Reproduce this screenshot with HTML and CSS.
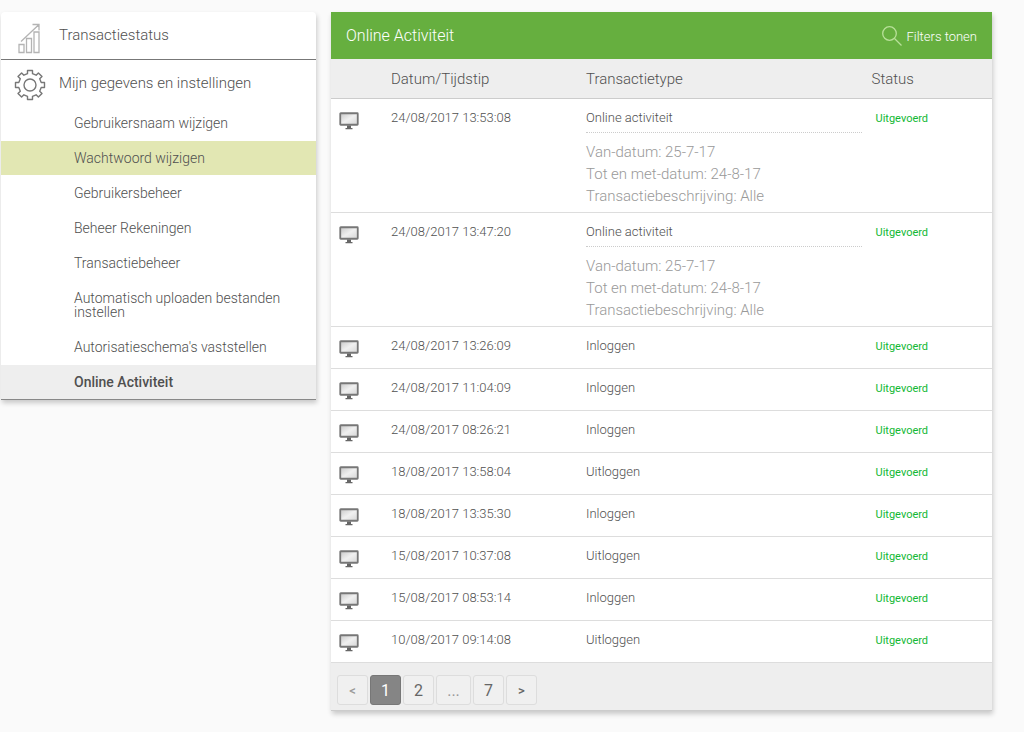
FILE: index.html
```html
<!DOCTYPE html>
<html lang="nl">
<head>
<meta charset="utf-8">
<meta name="viewport" content="width=device-width, initial-scale=1">
<title>Online Activiteit</title>
<link rel="stylesheet" href="styles.css">
</head>
<body>
<svg class="sprite" aria-hidden="true">
  <defs>
    <linearGradient id="screen-fill" x1="0" y1="0" x2="1" y2="1">
      <stop offset="0" stop-color="#c8c8c8"/>
      <stop offset="0.5" stop-color="#f0f0f0"/>
      <stop offset="1" stop-color="#d6d6d6"/>
    </linearGradient>
  </defs>
  <symbol id="monitor" viewBox="0 0 20 18">
    <rect x="1.250" y="1.250" width="17.500" height="11.500" rx="0.500" fill="url(#screen-fill)" stroke="#777" stroke-width="1.800"/>
    <path d="M8 13.500h4v2.500h1.500v1.300h-7V16H8z" fill="#666"/>
  </symbol>
</svg>
<div class="page">
  <nav class="sidebar" aria-label="Menu">
    <a class="menu-item menu-item-ruled" href="#">
      <svg class="menu-icon" viewBox="0 0 32 32" fill="none" stroke="#b4b4b4" stroke-width="1.300" aria-hidden="true">
        <path d="M5 22.500h5v8H5zM12.500 16.500h5v14h-5zM20 10h5v20.500h-5zM7 19.500 24.500 3M18.500 2.500H25v6"/>
      </svg>
      <span>Transactiestatus</span>
    </a>
    <a class="menu-item" href="#">
      <svg class="menu-icon" viewBox="0 0 32 32" fill="none" stroke="#777" stroke-width="1.400" stroke-linejoin="round" aria-hidden="true">
        <path d="M13.500 1.500h5v3.200l3.600 1.500 2.300-2.300 3.600 3.600-2.300 2.300 1.500 3.700h3.300v5h-3.300l-1.500 3.700 2.300 2.300-3.600 3.600-2.300-2.300-3.600 1.500v3.200h-5v-3.200l-3.600-1.500-2.300 2.300L4 24.500l2.300-2.300-1.500-3.700H1.500v-5h3.300l1.500-3.700L4 7.500l3.600-3.600 2.300 2.300 3.600-1.500z"/>
        <circle cx="16" cy="16" r="6"/>
      </svg>
      <span>Mijn gegevens en instellingen</span>
    </a>
    <ul class="submenu">
      <li><a href="#">Gebruikersnaam wijzigen</a></li>
      <li><a class="is-hover" href="#">Wachtwoord wijzigen</a></li>
      <li><a href="#">Gebruikersbeheer</a></li>
      <li><a href="#">Beheer Rekeningen</a></li>
      <li><a href="#">Transactiebeheer</a></li>
      <li><a href="#">Automatisch uploaden bestanden instellen</a></li>
      <li><a href="#">Autorisatieschema's vaststellen</a></li>
      <li><a class="is-current" href="#" aria-current="page">Online Activiteit</a></li>
    </ul>
  </nav>
  <main class="panel">
    <header class="panel-head">
      <h1>Online Activiteit</h1>
      <button class="filter-button" type="button">
        <svg class="filter-icon" viewBox="0 0 20 20" fill="none" stroke="#b9e09a" stroke-width="1.300" aria-hidden="true">
          <circle cx="7.500" cy="7.500" r="6.800"/>
          <path d="m12.500 12.500 7 7"/>
        </svg>
        <span>Filters tonen</span>
      </button>
    </header>
    <table class="activity">
      <thead>
        <tr><th class="col-icon"></th><th class="col-date" scope="col">Datum/Tijdstip</th><th class="col-type" scope="col">Transactietype</th><th class="col-status" scope="col">Status</th></tr>
      </thead>
      <tbody>
        <tr>
          <td class="device"><svg><use href="#monitor"/></svg></td><td>24/08/2017 13:53:08</td>
          <td><div class="type-name">Online activiteit</div><div class="details">Van-datum: 25-7-17<br>Tot en met-datum: 24-8-17<br>Transactiebeschrijving: Alle</div></td>
          <td class="status">Uitgevoerd</td>
        </tr>
        <tr>
          <td class="device"><svg><use href="#monitor"/></svg></td><td>24/08/2017 13:47:20</td>
          <td><div class="type-name">Online activiteit</div><div class="details">Van-datum: 25-7-17<br>Tot en met-datum: 24-8-17<br>Transactiebeschrijving: Alle</div></td>
          <td class="status">Uitgevoerd</td>
        </tr>
        <tr><td class="device"><svg><use href="#monitor"/></svg></td><td>24/08/2017 13:26:09</td><td>Inloggen</td><td class="status">Uitgevoerd</td></tr>
        <tr><td class="device"><svg><use href="#monitor"/></svg></td><td>24/08/2017 11:04:09</td><td>Inloggen</td><td class="status">Uitgevoerd</td></tr>
        <tr><td class="device"><svg><use href="#monitor"/></svg></td><td>24/08/2017 08:26:21</td><td>Inloggen</td><td class="status">Uitgevoerd</td></tr>
        <tr><td class="device"><svg><use href="#monitor"/></svg></td><td>18/08/2017 13:58:04</td><td>Uitloggen</td><td class="status">Uitgevoerd</td></tr>
        <tr><td class="device"><svg><use href="#monitor"/></svg></td><td>18/08/2017 13:35:30</td><td>Inloggen</td><td class="status">Uitgevoerd</td></tr>
        <tr><td class="device"><svg><use href="#monitor"/></svg></td><td>15/08/2017 10:37:08</td><td>Uitloggen</td><td class="status">Uitgevoerd</td></tr>
        <tr><td class="device"><svg><use href="#monitor"/></svg></td><td>15/08/2017 08:53:14</td><td>Inloggen</td><td class="status">Uitgevoerd</td></tr>
        <tr><td class="device"><svg><use href="#monitor"/></svg></td><td>10/08/2017 09:14:08</td><td>Uitloggen</td><td class="status">Uitgevoerd</td></tr>
      </tbody>
    </table>
    <nav class="pager" aria-label="Paginering">
      <button type="button" class="arrow muted">&lt;</button>
      <button type="button" class="active" aria-current="page">1</button>
      <button type="button">2</button>
      <button type="button" class="muted wide">...</button>
      <button type="button">7</button>
      <button type="button" class="arrow">&gt;</button>
    </nav>
  </main>
</div>
</body>
</html>
```
FILE: styles.css
```css
* {
  box-sizing: border-box;
}

body {
  margin: 0;
  background: #fafafa;
  color: #505050;
  font-family: Roboto, sans-serif;
  font-size: 13px;
  font-weight: 300;
}

a {
  color: inherit;
  text-decoration: none;
}

button {
  font-family: inherit;
  cursor: pointer;
}

.sprite {
  position: absolute;
  width: 0;
  height: 0;
}

.page {
  display: grid;
  grid-template-columns: 315fr 661fr;
  gap: 15px;
  align-items: start;
  padding: 12px 32px 20px 1px;
}

.sidebar,
.panel {
  background: #fff;
  box-shadow: 1px 3px 5px rgba(0, 0, 0, 0.2);
}

.sidebar {
  border-bottom: 1px solid #888;
  border-radius: 4px 4px 0 0;
}

.menu-item {
  display: flex;
  align-items: center;
  gap: 13px;
  height: 46px;
  padding: 4px 13px 0;
  font-size: 15px;
}

.menu-item span {
  padding-bottom: 5px;
}

.menu-item-ruled {
  height: 48px;
  border-bottom: 1px solid #777;
}

.menu-icon {
  width: 32px;
  height: 32px;
}

.submenu {
  display: grid;
  gap: 1px;
  margin: 0;
  padding: 0;
  list-style: none;
}

.submenu a {
  display: block;
  padding: 10px 32px 10px 73px;
  font-size: 14px;
  line-height: 14px;
}

.submenu .is-hover {
  background: #e2e7b3;
}

.submenu .is-current {
  background: #eee;
  font-weight: 500;
}

.panel-head {
  display: flex;
  align-items: center;
  justify-content: space-between;
  height: 47px;
  padding: 0 15px;
  background: #66af3f;
  color: #fff;
}

.panel-head h1 {
  margin: 0;
  font-size: 16px;
  font-weight: 300;
}

.filter-button {
  display: flex;
  align-items: center;
  gap: 4px;
  padding: 0;
  border: 0;
  background: none;
  color: #fff;
  font-size: 13px;
  font-weight: 300;
}

.filter-button span {
  padding-top: 2px;
}

.filter-icon {
  width: 20px;
  height: 20px;
}

.activity {
  width: 100%;
  border-collapse: separate;
  border-spacing: 0;
  table-layout: fixed;
}

.activity th {
  height: 40px;
  padding: 0;
  border-bottom: 1px solid #ccc;
  background: #eee;
  font-size: 15px;
  font-weight: 300;
  text-align: left;
}

.activity .col-icon {
  width: 60px;
}

.activity .col-date {
  width: 29.5%;
}

.activity .col-type {
  width: 43.2%;
}

.activity td {
  height: 42px;
  padding: 11px 10px 0 0;
  border-bottom: 1px solid #ddd;
  line-height: 16px;
  vertical-align: top;
}

.activity .device {
  padding-left: 8px;
}

.device svg {
  display: block;
  width: 20px;
  height: 18px;
  margin-top: 2px;
}

.activity .status {
  padding-left: 4px;
  color: #12b834;
  font-size: 11px;
  font-weight: 400;
  line-height: 18px;
}

.type-name {
  padding-bottom: 6px;
  border-bottom: 1px dotted #ccc;
}

.details {
  padding: 8px 0 5px;
  color: #999;
  font-size: 15px;
  line-height: 22px;
}

.pager {
  display: flex;
  gap: 2px;
  padding: 12px 6px 5px;
  border-bottom: 1px solid #ccc;
  background: #eee;
}

.pager button {
  width: 31px;
  height: 30px;
  padding: 0;
  border: 1px solid #ddd;
  border-radius: 3px;
  background: #f0f0f0;
  color: #666;
  font-size: 16px;
}

.pager .wide {
  width: 35px;
}

.pager .arrow {
  font-size: 13px;
  font-weight: 500;
}

.pager .muted {
  color: #999;
}

.pager .active {
  border-color: #777;
  background: #858585;
  color: #fff;
}
```
